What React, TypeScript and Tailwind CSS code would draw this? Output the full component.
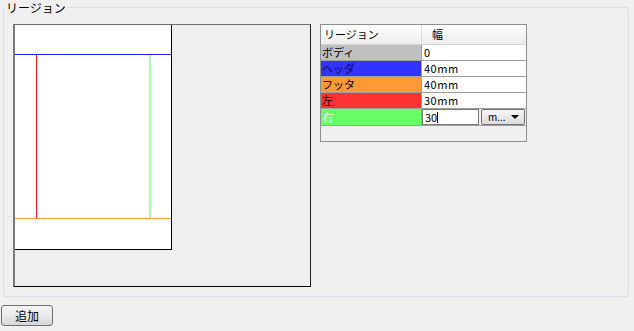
const FONT = "font-['Noto_Sans_CJK_JP','Liberation_Sans',sans-serif]";

const ROWS = [
    { name: 'ボディ', width: '0',    bg: 'bg-[#c0c0c0]', fg: 'text-black' },
    { name: 'ヘッダ', width: '40mm', bg: 'bg-[#3333ff]', fg: 'text-[#10104a]' },
    { name: 'フッタ', width: '40mm', bg: 'bg-[#ff9933]', fg: 'text-black' },
    { name: '左',     width: '30mm', bg: 'bg-[#ff3333]', fg: 'text-black' },
];

function PagePreview() {
    return (
        <div className="w-[298px] h-[263px] shrink-0 bg-[#efefef] border-t border-l-2 border-r border-b border-t-[#6d6d6d] border-l-[#7a7a7a] border-r-[#222] border-b-black">
            <div className="w-[157px] h-[225px] bg-white border-r border-b border-black">
                {/* margins drawn on the page */}
                <svg width="156" height="224" className="block" shapeRendering="crispEdges">
                    <rect x="0" y="29" width="156" height="1" fill="#1a1aff" />
                    <rect x="0" y="193" width="156" height="1" fill="#ff9a30" />
                    <rect x="21" y="30" width="1" height="163" fill="#ff1a1a" />
                    <rect x="134" y="30" width="2" height="163" fill="#aaffaa" />
                </svg>
            </div>
        </div>
    );
}

function RegionTable() {
    return (
        <div className="w-[207px] h-[118px] shrink-0 flex flex-col bg-[#f0f0f0] border border-[#8e8f8f] text-[11px] leading-none text-black">
            {/* header */}
            <div className="flex h-[20px] bg-gradient-to-b from-white to-[#ececec] border-b border-[#d5d5d5]">
                <div className="w-[101px] flex items-center pl-[3px] border-r border-[#dcdcdc]">リージョン</div>
                <div className="flex-1 flex items-center pl-[10px]">幅</div>
            </div>
            {ROWS.map((r) => (
                <div key={r.name} className="flex h-[16px] border-b border-[#a0a0a0]">
                    <div className={`w-[101px] flex items-center pl-px border-r border-[#a0a0a0] ${r.bg} ${r.fg}`}>{r.name}</div>
                    <div className="flex-1 flex items-center pl-[2px] bg-white tracking-[0.5px]">{r.width}</div>
                </div>
            ))}
            <div className="flex h-[17px] border-b border-[#a0a0a0]">
                <div className="w-[101px] flex items-center pl-px border-r border-[#a0a0a0] bg-[#66ff66] text-white">右</div>
                <div className="flex-1 flex items-stretch bg-[#f0f0f0]">
                    <div className="w-[57px] flex items-center pl-[2px] bg-white border border-[#7a7a7a]">
                        30<span className="w-px h-[11px] bg-black" />
                    </div>
                    <button className="ml-[2px] w-[44px] flex items-center justify-between pl-[6px] pr-[5px] bg-gradient-to-b from-[#f6f6f6] to-[#dcdcdc] border border-[#707070] rounded-[2px] text-[10px]">
                        <span>m...</span>
                        <span className="w-0 h-0 border-l-[4px] border-r-[4px] border-t-[4px] border-l-transparent border-r-transparent border-t-black" />
                    </button>
                </div>
            </div>
        </div>
    );
}

export default function App() {
    return (
        <div className={`w-[634px] h-[331px] bg-[#f0f0f0] overflow-hidden ${FONT}`}>
            <fieldset className="ml-[3px] w-[626px] h-[297px] border border-[#d5dfe5] rounded-[3px] pl-[9px] pt-[9px]">
                <legend className="-ml-[8px] px-[1px] text-[12px] leading-[15px] text-black">リージョン</legend>
                <div className="flex gap-[9px]">
                    <PagePreview />
                    <RegionTable />
                </div>
            </fieldset>
            <button className="mt-[8px] ml-[1px] w-[52px] h-[21px] flex items-center justify-center text-[12px] text-black bg-gradient-to-b from-[#f3f3f3] via-[#ebebeb] to-[#d6d6d6] border border-[#707070] rounded-[3px]">
                追加
            </button>
        </div>
    );
}
